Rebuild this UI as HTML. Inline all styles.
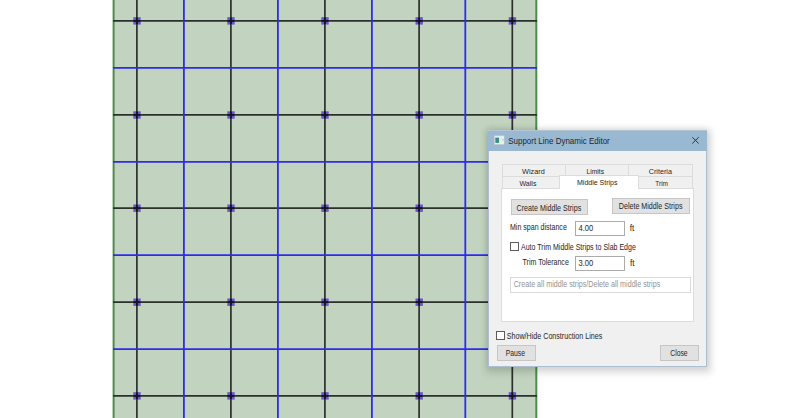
<!DOCTYPE html>
<html><head><meta charset="utf-8">
<style>
html,body{margin:0;padding:0;width:800px;height:418px;overflow:hidden;background:#fff;}
body{position:relative;font-family:"Liberation Sans",sans-serif;}
svg.grid{position:absolute;left:0;top:0;}
.a{position:absolute;box-sizing:border-box;}
#dlg{left:488px;top:130px;width:219px;height:237px;background:#f0f0f0;box-shadow:1px 3px 7px 3px rgba(0,0,0,0.14),0 -1px 6px 1px rgba(0,0,0,0.07);border:1px solid #adbfcf;}
#title{left:488px;top:130px;width:219px;height:21px;background:#99b9d2;}
.t{position:absolute;white-space:nowrap;font-size:8px;color:#1e1e1e;line-height:8px;transform-origin:0 0;}
.tab{background:#f0f0f0;border:1px solid #dcdcdc;}
.btn{background:#e1e1e1;border:1px solid #c6c6c6;}
.inp{background:#fff;border:1px solid #ababab;}
.chk{background:#fff;border:1px solid #5c5c5c;}

</style></head><body>
<svg class="grid" width="800" height="418">
<rect x="113" y="0" width="424" height="418" fill="#c2d4bf"/>
<rect x="112.6" y="0" width="2.0" height="418" fill="#4e8c4e"/>
<rect x="535.3" y="0" width="2.0" height="418" fill="#4e8c4e"/>
<g fill="#6855d0">
<rect x="133.30" y="17.20" width="7.4" height="7.4"/>
<rect x="133.30" y="111.30" width="7.4" height="7.4"/>
<rect x="133.30" y="204.50" width="7.4" height="7.4"/>
<rect x="133.30" y="298.50" width="7.4" height="7.4"/>
<rect x="133.30" y="392.20" width="7.4" height="7.4"/>
<rect x="227.30" y="17.20" width="7.4" height="7.4"/>
<rect x="227.30" y="111.30" width="7.4" height="7.4"/>
<rect x="227.30" y="204.50" width="7.4" height="7.4"/>
<rect x="227.30" y="298.50" width="7.4" height="7.4"/>
<rect x="227.30" y="392.20" width="7.4" height="7.4"/>
<rect x="321.30" y="17.20" width="7.4" height="7.4"/>
<rect x="321.30" y="111.30" width="7.4" height="7.4"/>
<rect x="321.30" y="204.50" width="7.4" height="7.4"/>
<rect x="321.30" y="298.50" width="7.4" height="7.4"/>
<rect x="321.30" y="392.20" width="7.4" height="7.4"/>
<rect x="415.50" y="17.20" width="7.4" height="7.4"/>
<rect x="415.50" y="111.30" width="7.4" height="7.4"/>
<rect x="415.50" y="204.50" width="7.4" height="7.4"/>
<rect x="415.50" y="298.50" width="7.4" height="7.4"/>
<rect x="415.50" y="392.20" width="7.4" height="7.4"/>
<rect x="508.70" y="17.20" width="7.4" height="7.4"/>
<rect x="508.70" y="111.30" width="7.4" height="7.4"/>
<rect x="508.70" y="204.50" width="7.4" height="7.4"/>
<rect x="508.70" y="298.50" width="7.4" height="7.4"/>
<rect x="508.70" y="392.20" width="7.4" height="7.4"/>
</g>
<g stroke="#2a302c" stroke-width="1.7">
<line x1="113" y1="20.8" x2="537" y2="20.8"/>
<line x1="113" y1="114.9" x2="537" y2="114.9"/>
<line x1="113" y1="208.1" x2="537" y2="208.1"/>
<line x1="113" y1="302.1" x2="537" y2="302.1"/>
<line x1="113" y1="395.8" x2="537" y2="395.8"/>
<line x1="136.9" y1="0" x2="136.9" y2="418"/>
<line x1="230.9" y1="0" x2="230.9" y2="418"/>
<line x1="324.9" y1="0" x2="324.9" y2="418"/>
<line x1="419.1" y1="0" x2="419.1" y2="418"/>
<line x1="512.3" y1="0" x2="512.3" y2="418"/>
</g>
<g stroke="#14121e" stroke-width="1.7">
<path d="M133.60 20.8 H140.20 M136.9 17.50 V24.10"/>
<path d="M133.60 114.9 H140.20 M136.9 111.60 V118.20"/>
<path d="M133.60 208.1 H140.20 M136.9 204.80 V211.40"/>
<path d="M133.60 302.1 H140.20 M136.9 298.80 V305.40"/>
<path d="M133.60 395.8 H140.20 M136.9 392.50 V399.10"/>
<path d="M227.60 20.8 H234.20 M230.9 17.50 V24.10"/>
<path d="M227.60 114.9 H234.20 M230.9 111.60 V118.20"/>
<path d="M227.60 208.1 H234.20 M230.9 204.80 V211.40"/>
<path d="M227.60 302.1 H234.20 M230.9 298.80 V305.40"/>
<path d="M227.60 395.8 H234.20 M230.9 392.50 V399.10"/>
<path d="M321.60 20.8 H328.20 M324.9 17.50 V24.10"/>
<path d="M321.60 114.9 H328.20 M324.9 111.60 V118.20"/>
<path d="M321.60 208.1 H328.20 M324.9 204.80 V211.40"/>
<path d="M321.60 302.1 H328.20 M324.9 298.80 V305.40"/>
<path d="M321.60 395.8 H328.20 M324.9 392.50 V399.10"/>
<path d="M415.80 20.8 H422.40 M419.1 17.50 V24.10"/>
<path d="M415.80 114.9 H422.40 M419.1 111.60 V118.20"/>
<path d="M415.80 208.1 H422.40 M419.1 204.80 V211.40"/>
<path d="M415.80 302.1 H422.40 M419.1 298.80 V305.40"/>
<path d="M415.80 395.8 H422.40 M419.1 392.50 V399.10"/>
<path d="M509.00 20.8 H515.60 M512.3 17.50 V24.10"/>
<path d="M509.00 114.9 H515.60 M512.3 111.60 V118.20"/>
<path d="M509.00 208.1 H515.60 M512.3 204.80 V211.40"/>
<path d="M509.00 302.1 H515.60 M512.3 298.80 V305.40"/>
<path d="M509.00 395.8 H515.60 M512.3 392.50 V399.10"/>
</g>
<g stroke="#2c2cee" stroke-width="1.8">
<line x1="113" y1="67.9" x2="537" y2="67.9"/>
<line x1="113" y1="161.8" x2="537" y2="161.8"/>
<line x1="113" y1="255.1" x2="537" y2="255.1"/>
<line x1="113" y1="349.1" x2="537" y2="349.1"/>
<line x1="183.9" y1="0" x2="183.9" y2="418"/>
<line x1="277.9" y1="0" x2="277.9" y2="418"/>
<line x1="371.9" y1="0" x2="371.9" y2="418"/>
<line x1="465.3" y1="0" x2="465.3" y2="418"/>
</g></svg>
<div class="a" id="dlg"></div>
<div class="a" id="title"></div>
<div class="a" style="left:488px;top:130px;width:219px;height:1px;background:#b3c5d3;"></div>
<!-- icon -->
<svg class="a" style="left:0;top:0" width="800" height="418">
<rect x="494.6" y="135.9" width="9.4" height="8.3" fill="#f2f2f2" stroke="#d6d2d2" stroke-width="0.6"/>
<rect x="494.9" y="136.2" width="8.8" height="1" fill="#e4e8ee"/>
<defs><linearGradient id="ig" x1="0" y1="0" x2="0" y2="1"><stop offset="0" stop-color="#3f7fb0"/><stop offset="1" stop-color="#2f9a5e"/></linearGradient></defs><rect x="495.3" y="137.6" width="3.7" height="5.3" fill="url(#ig)"/>
<rect x="499.6" y="137.8" width="0.6" height="5" fill="#d4d4d4"/>
<rect x="500.8" y="137.8" width="0.6" height="5" fill="#dadada"/>
<rect x="502.1" y="138.8" width="1.4" height="2" fill="#b6dcae"/>
<path d="M692.3 137.2 L698.7 143.5 M698.7 137.2 L692.3 143.5" stroke="#30343e" stroke-width="1" fill="none"/>
</svg>
<!-- tabs row 1 -->
<div class="a tab" style="left:502px;top:164px;width:64px;height:13px;"></div>
<div class="a tab" style="left:565px;top:164px;width:64px;height:13px;"></div>
<div class="a tab" style="left:628px;top:164px;width:65px;height:13px;"></div>
<!-- panel -->
<div class="a" style="left:501px;top:188px;width:193px;height:134px;background:#fff;border:1px solid #dcdcdc;"></div>
<!-- tabs row 2 -->
<div class="a tab" style="left:502px;top:176px;width:58px;height:13px;"></div>
<div class="a tab" style="left:637px;top:176px;width:56px;height:13px;"></div>
<div class="a" style="left:559px;top:175px;width:80px;height:14px;background:#fff;border:1px solid #dcdcdc;border-bottom:none;"></div>
<!-- buttons -->
<div class="a btn" style="left:511px;top:199px;width:77px;height:16px;"></div>
<div class="a btn" style="left:612px;top:198px;width:78px;height:16px;"></div>
<div class="a inp" style="left:575px;top:221px;width:50px;height:15px;"></div>
<div class="a chk" style="left:510px;top:242px;width:9px;height:9px;"></div>
<div class="a inp" style="left:575px;top:256px;width:50px;height:15px;"></div>
<div class="a" style="left:510px;top:277px;width:181px;height:16px;background:#fff;border:1px solid #dadada;"></div>
<div class="a chk" style="left:496px;top:331px;width:9px;height:9px;"></div>
<div class="a btn" style="left:497px;top:345px;width:39px;height:16px;"></div>
<div class="a btn" style="left:660px;top:345px;width:39px;height:16px;"></div>
<svg class="a" style="left:0;top:0" width="800" height="418" font-family="Liberation Sans">
<text x="508.20" y="143.80" font-size="8.9" fill="#262626" textLength="101.56" lengthAdjust="spacingAndGlyphs">Support Line Dynamic Editor</text>
<text x="522.10" y="174.00" font-size="8.0" fill="#262626" textLength="22.61" lengthAdjust="spacingAndGlyphs">Wizard</text>
<text x="586.50" y="173.80" font-size="8.0" fill="#262626" textLength="17.50" lengthAdjust="spacingAndGlyphs">Limits</text>
<text x="648.80" y="173.80" font-size="8.0" fill="#262626" textLength="23.11" lengthAdjust="spacingAndGlyphs">Criteria</text>
<text x="519.50" y="186.00" font-size="8.0" fill="#262626" textLength="16.90" lengthAdjust="spacingAndGlyphs">Walls</text>
<text x="577.00" y="184.50" font-size="8.0" fill="#262626" textLength="40.50" lengthAdjust="spacingAndGlyphs">Middle Strips</text>
<text x="655.30" y="185.60" font-size="8.0" fill="#262626" textLength="12.73" lengthAdjust="spacingAndGlyphs">Trim</text>
<text x="516.60" y="210.60" font-size="8.6" fill="#262626" textLength="64.65" lengthAdjust="spacingAndGlyphs">Create Middle Strips</text>
<text x="618.80" y="208.70" font-size="8.6" fill="#262626" textLength="63.65" lengthAdjust="spacingAndGlyphs">Delete Middle Strips</text>
<text x="510.00" y="230.40" font-size="8.6" fill="#262626" textLength="56.82" lengthAdjust="spacingAndGlyphs">Min span distance</text>
<text x="578.50" y="231.30" font-size="8.6" fill="#262626" textLength="14.71" lengthAdjust="spacingAndGlyphs">4.00</text>
<text x="629.70" y="230.90" font-size="8.2" fill="#262626" textLength="4.57" lengthAdjust="spacingAndGlyphs">ft</text>
<text x="521.00" y="250.00" font-size="8.6" fill="#262626" textLength="114.82" lengthAdjust="spacingAndGlyphs">Auto Trim Middle Strips to Slab Edge</text>
<text x="522.50" y="265.00" font-size="8.6" fill="#262626" textLength="46.32" lengthAdjust="spacingAndGlyphs">Trim Tolerance</text>
<text x="578.50" y="266.30" font-size="8.6" fill="#262626" textLength="14.71" lengthAdjust="spacingAndGlyphs">3.00</text>
<text x="630.00" y="266.00" font-size="8.2" fill="#262626" textLength="4.57" lengthAdjust="spacingAndGlyphs">ft</text>
<text x="513.70" y="286.60" font-size="8.6" fill="#939393" textLength="146.55" lengthAdjust="spacingAndGlyphs">Create all middle strips/Delete all middle strips</text>
<text x="506.80" y="339.00" font-size="8.6" fill="#262626" textLength="95.45" lengthAdjust="spacingAndGlyphs">Show/Hide Construction Lines</text>
<text x="505.70" y="355.60" font-size="8.6" fill="#262626" textLength="19.33" lengthAdjust="spacingAndGlyphs">Pause</text>
<text x="670.30" y="355.60" font-size="8.6" fill="#262626" textLength="17.33" lengthAdjust="spacingAndGlyphs">Close</text>
</svg>
</body></html>
